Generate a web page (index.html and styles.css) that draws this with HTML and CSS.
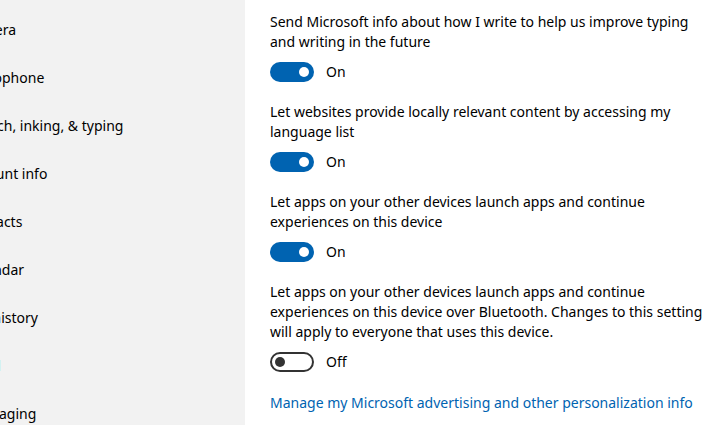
FILE: index.html
```html
<!DOCTYPE html>
<html lang="en">
<head>
<meta charset="utf-8">
<title>Privacy - Speech, inking, &amp; typing</title>
<link rel="stylesheet" href="styles.css">
</head>
<body>
<div class="window">
  <nav class="sidebar">
    <div class="nav-item"><span>Camera</span></div>
    <div class="nav-item"><span>Microphone</span></div>
    <div class="nav-item"><span>Speech, inking, &amp; typing</span></div>
    <div class="nav-item"><span>Account info</span></div>
    <div class="nav-item"><span>Contacts</span></div>
    <div class="nav-item"><span>Calendar</span></div>
    <div class="nav-item"><span>Call history</span></div>
    <div class="nav-item"><span>Email</span></div>
    <div class="nav-item"><span>Messaging</span></div>
  </nav>
  <main class="content">
    <section class="setting">
      <p class="desc">Send Microsoft info about how I write to help us improve typing and writing in the future</p>
      <div class="toggle-row">
        <span class="toggle on"><span class="knob"></span></span>
        <span class="state">On</span>
      </div>
    </section>
    <section class="setting">
      <p class="desc">Let websites provide locally relevant content by accessing my language list</p>
      <div class="toggle-row">
        <span class="toggle on"><span class="knob"></span></span>
        <span class="state">On</span>
      </div>
    </section>
    <section class="setting">
      <p class="desc">Let apps on your other devices launch apps and continue experiences on this device</p>
      <div class="toggle-row">
        <span class="toggle on"><span class="knob"></span></span>
        <span class="state">On</span>
      </div>
    </section>
    <section class="setting">
      <p class="desc">Let apps on your other devices launch apps and continue experiences on this device over Bluetooth. Changes to this setting will apply to everyone that uses this device.</p>
      <div class="toggle-row">
        <span class="toggle off"><span class="knob"></span></span>
        <span class="state">Off</span>
      </div>
    </section>
    <a class="link" href="#">Manage my Microsoft advertising and other personalization info</a>
  </main>
</div>
</body>
</html>
```

FILE: styles.css
```css
html, body {
  margin: 0;
  padding: 0;
  background: #ffffff;
}

body {
  width: 711px;
  height: 425px;
  overflow: hidden;
  font-family: "Noto Sans", "Open Sans", sans-serif;
  font-size: 14px;
  color: #000000;
}

.window {
  display: flex;
  height: 425px;
}

.sidebar {
  width: 245px;
  flex: none;
  background: #f2f2f2;
  padding-top: 6px;
  box-sizing: border-box;
  overflow: hidden;
}

.nav-item {
  height: 48px;
  display: flex;
  align-items: center;
  white-space: nowrap;
}

.nav-item span {
  margin-left: -35px;
  line-height: 20px;
}

.content {
  padding: 12px 0 0 25px;
  width: 440px;
}

.setting {
  margin-bottom: 20px;
}

.desc {
  margin: 0;
  line-height: 20px;
}

.toggle-row {
  margin-top: 10px;
  display: flex;
  align-items: center;
  gap: 12px;
  height: 20px;
}

.toggle {
  width: 44px;
  height: 20px;
  box-sizing: border-box;
  border-radius: 10px;
  display: flex;
  align-items: center;
  padding: 0 5px;
}

.toggle.on {
  background: #0063b1;
  justify-content: flex-end;
}

.toggle.off {
  border: 2px solid #333333;
  justify-content: flex-start;
  padding: 0 3px;
}

.knob {
  width: 10px;
  height: 10px;
  border-radius: 50%;
}

.toggle.on .knob {
  background: #ffffff;
}

.toggle.off .knob {
  background: #333333;
}

.state {
  line-height: 20px;
}

.link {
  display: block;
  margin-top: 21px;
  line-height: 20px;
  color: #0063b1;
  text-decoration: none;
  white-space: nowrap;
}
```
